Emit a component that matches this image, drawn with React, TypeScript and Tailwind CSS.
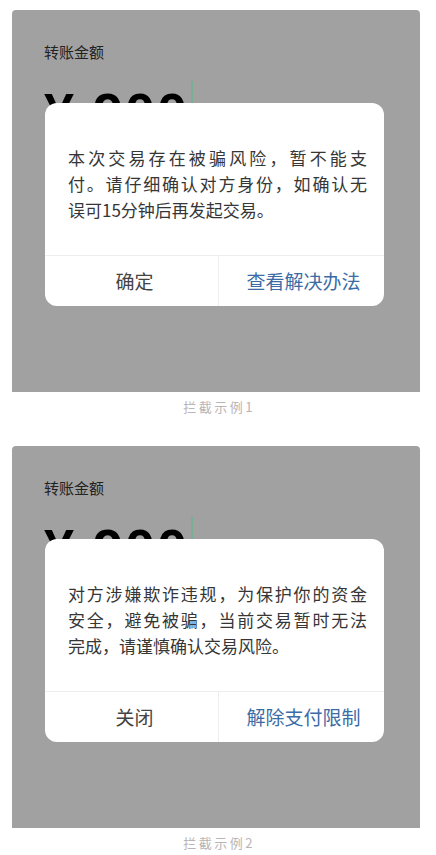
const cjk = {
  fontFamily: '"Noto Sans CJK SC", "Noto Sans", sans-serif',
}

type Example = {
  lines: string[]
  cancel: string
  action: string
  caption: string
}

const examples: Example[] = [
  {
    lines: [
      '本次交易存在被骗风险，暂不能支',
      '付。请仔细确认对方身份，如确认无',
      '误可15分钟后再发起交易。',
    ],
    cancel: '确定',
    action: '查看解决办法',
    caption: '拦截示例1',
  },
  {
    lines: [
      '对方涉嫌欺诈违规，为保护你的资金',
      '安全，避免被骗，当前交易暂时无法',
      '完成，请谨慎确认交易风险。',
    ],
    cancel: '关闭',
    action: '解除支付限制',
    caption: '拦截示例2',
  },
]

const BlockedPayment = ({ lines, cancel, action, caption }: Example) => {
  return (
    <div>
      <div className="relative mx-[12px] h-[382px] w-[408px] overflow-hidden rounded-t-[4px] bg-[#a1a1a1]">
        <div className="pt-[32px] pl-[32px]">
          <p className="text-[15px] leading-[20px] text-[#222]" style={cjk}>
            转账金额
          </p>

          <div className="mt-[22px] flex items-start">
            <span className="font-['Liberation_Sans',sans-serif] text-[54px] leading-[56px] font-bold tracking-[2px] text-black">
              ¥ 900
            </span>
            <span className="mt-[-3px] ml-[2px] h-[44px] w-[1.5px] bg-[#79ae96]" />
          </div>
        </div>

        {/* dialog over the transfer screen */}
        <div
          className="absolute top-[93px] left-[33px] w-[339px] overflow-hidden rounded-[12px] bg-white"
          style={cjk}
        >
          <div className="w-[322px] pt-[42px] pb-[32px] pl-[23px] text-[17px] leading-[26px] whitespace-nowrap text-[#363636]">
            {lines.map((line, i) => (
              <p
                key={line}
                className={
                  i < lines.length - 1
                    ? 'text-justify [text-align-last:justify]'
                    : 'text-left'
                }
              >
                {line}
              </p>
            ))}
          </div>

          <div className="flex h-[51px] border-t border-[#eeeeee]">
            <button className="w-[173px] pl-[6px] text-[19px] text-[#444]">
              {cancel}
            </button>
            <button className="flex-1 border-l border-[#eeeeee] pl-[4px] text-[19px] text-[#3b6ca6]">
              {action}
            </button>
          </div>
        </div>
      </div>

      <div className="flex h-[30px] items-center justify-center">
        <span
          className="pl-[2px] text-[13px] tracking-[2.5px] text-[#b9b4b6]"
          style={cjk}
        >
          {caption}
        </span>
      </div>
      <div className="h-[24px]" />
    </div>
  )
}

export default function App() {
  return (
    <div className="min-h-screen bg-white pt-[10px]">
      {examples.map((item) => (
        <BlockedPayment key={item.caption} {...item} />
      ))}
    </div>
  )
}
